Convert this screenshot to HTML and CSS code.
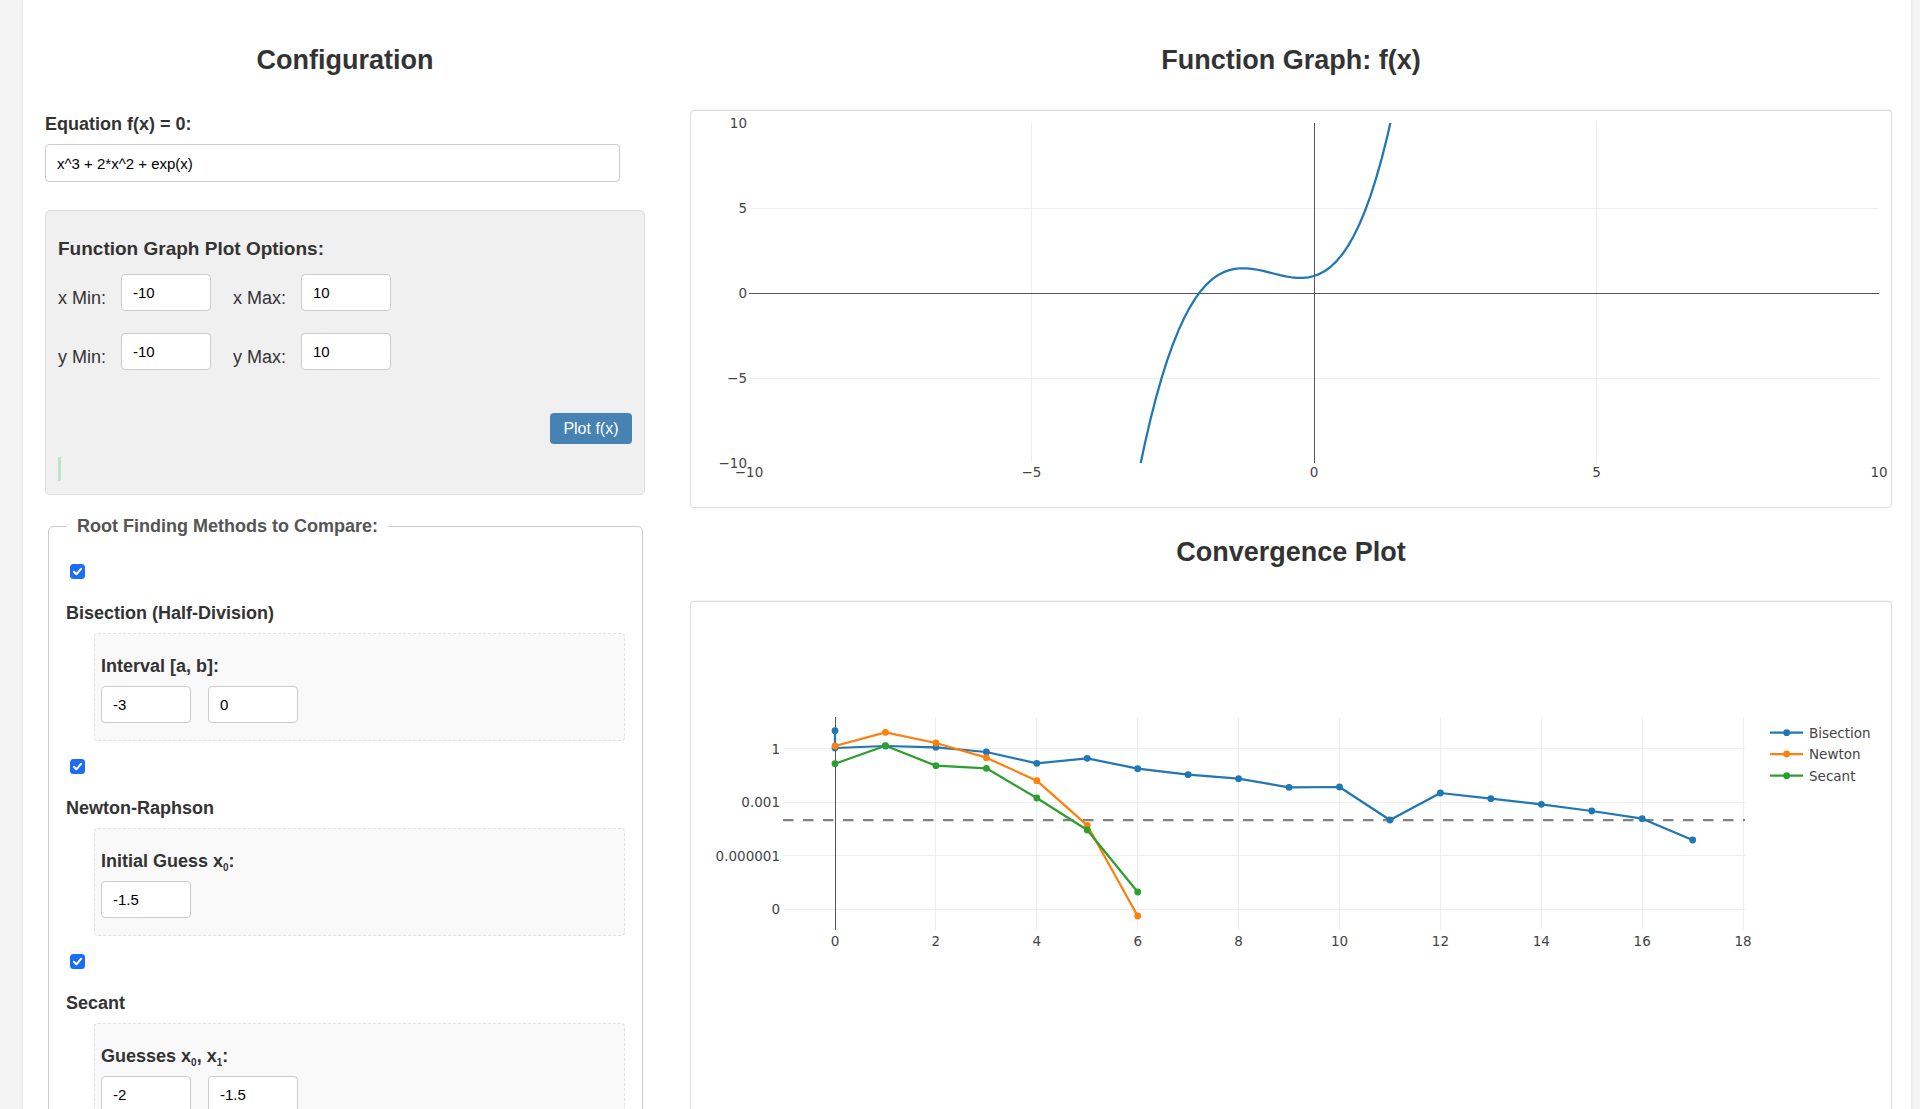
FILE: index.html
```html
<!DOCTYPE html>
<html lang="en">
<head>
<meta charset="utf-8">
<title>Root Finding Methods Comparison</title>
<link rel="stylesheet" href="styles.css">
</head>
<body>
<div class="page">
  <section class="config">
    <h2 class="title">Configuration</h2>
    <label class="field-label" for="eq">Equation f(x) = 0:</label>
    <input id="eq" class="text-input eq-input" type="text" value="x^3 + 2*x^2 + exp(x)">

    <div class="plot-options">
      <h3 class="options-title">Function Graph Plot Options:</h3>
      <div class="range-row">
        <label class="range-label">x Min:</label>
        <input class="text-input small-input" type="text" value="-10">
        <label class="range-label second">x Max:</label>
        <input class="text-input small-input" type="text" value="10">
      </div>
      <div class="range-row row-2">
        <label class="range-label">y Min:</label>
        <input class="text-input small-input" type="text" value="-10">
        <label class="range-label second">y Max:</label>
        <input class="text-input small-input" type="text" value="10">
      </div>
      <div class="button-row"><button class="plot-btn" type="button">Plot f(x)</button></div>
      <div class="status"></div>
    </div>

    <fieldset class="methods">
      <legend>Root Finding Methods to Compare:</legend>

      <div class="method">
        <span class="check"><svg width="15" height="15" viewBox="0 0 15 15"><path d="M3.9 7.8 L6.4 10.3 L11.2 4.7" fill="none" stroke="#fff" stroke-width="2" stroke-linecap="round" stroke-linejoin="round"/></svg></span>
        <h4 class="method-name">Bisection (Half-Division)</h4>
        <div class="params">
          <div class="param-label">Interval [a, b]:</div>
          <div class="param-inputs">
            <input class="text-input small-input" type="text" value="-3">
            <input class="text-input small-input" type="text" value="0">
          </div>
        </div>
      </div>

      <div class="method">
        <span class="check"><svg width="15" height="15" viewBox="0 0 15 15"><path d="M3.9 7.8 L6.4 10.3 L11.2 4.7" fill="none" stroke="#fff" stroke-width="2" stroke-linecap="round" stroke-linejoin="round"/></svg></span>
        <h4 class="method-name">Newton-Raphson</h4>
        <div class="params">
          <div class="param-label">Initial Guess x<sub>0</sub>:</div>
          <div class="param-inputs">
            <input class="text-input small-input" type="text" value="-1.5">
          </div>
        </div>
      </div>

      <div class="method">
        <span class="check"><svg width="15" height="15" viewBox="0 0 15 15"><path d="M3.9 7.8 L6.4 10.3 L11.2 4.7" fill="none" stroke="#fff" stroke-width="2" stroke-linecap="round" stroke-linejoin="round"/></svg></span>
        <h4 class="method-name">Secant</h4>
        <div class="params">
          <div class="param-label">Guesses x<sub>0</sub>, x<sub>1</sub>:</div>
          <div class="param-inputs">
            <input class="text-input small-input" type="text" value="-2">
            <input class="text-input small-input" type="text" value="-1.5">
          </div>
        </div>
      </div>
    </fieldset>
  </section>

  <section class="plots">
    <h2 class="title">Function Graph: f(x)</h2>
    <div class="chart chart-fn">
      <svg width="1200" height="396" viewBox="0 0 1200 396">
        <defs>
          <clipPath id="fnclip"><rect x="58" y="12" width="1130" height="340"/></clipPath>
        </defs>
        <g class="grid">
          <line x1="340.5" y1="12" x2="340.5" y2="352"/>
          <line x1="905.5" y1="12" x2="905.5" y2="352"/>
          <line x1="58" y1="97" x2="1188" y2="97"/>
          <line x1="58" y1="267" x2="1188" y2="267"/>
        </g>
        <g class="zero">
          <line x1="623" y1="12" x2="623" y2="352"/>
          <line x1="58" y1="182" x2="1188" y2="182"/>
        </g>
        <polyline class="curve" clip-path="url(#fnclip)" points="442.2,390.2 447.85,360.94 453.5,334.15 459.15,309.74 464.8,287.59 470.45,267.61 476.1,249.69 481.75,233.73 487.4,219.62 493.05,207.28 498.7,196.57 504.35,187.42 510,179.7 515.65,173.31 521.3,168.18 526.95,164.15 532.6,161.16 538.25,159.08 543.9,157.81 549.55,157.25 555.2,157.3 560.85,157.83 566.5,158.74 572.15,159.93 577.8,161.31 583.45,162.72 589.1,164.1 594.75,165.31 600.4,166.26 606.05,166.8 611.7,166.85 617.35,166.29 623,165 628.65,162.86 634.3,159.75 639.95,155.53 645.6,150.11 651.25,143.34 656.9,135.11 662.55,125.27 668.2,113.69 673.85,100.25 679.5,84.79 685.15,67.16 690.8,47.22 696.45,24.82 702.1,-0.22 707.75,-28.07"/>
        <g class="tick tick-y">
          <text x="56" y="17">10</text>
          <text x="56" y="102">5</text>
          <text x="56" y="187">0</text>
          <text x="56" y="272">−5</text>
          <text x="56" y="357">−10</text>
        </g>
        <g class="tick tick-x">
          <text x="58" y="365.5">−10</text>
          <text x="340.5" y="365.5">−5</text>
          <text x="623" y="365.5">0</text>
          <text x="905.5" y="365.5">5</text>
          <text x="1188" y="365.5">10</text>
        </g>
      </svg>
    </div>

    <h2 class="title conv-title">Convergence Plot</h2>
    <div class="chart chart-conv">
      <svg width="1200" height="558" viewBox="0 0 1200 558">
        <g class="grid">
          <line x1="244.9" y1="115" x2="244.9" y2="328"/>
          <line x1="345.8" y1="115" x2="345.8" y2="328"/>
          <line x1="446.7" y1="115" x2="446.7" y2="328"/>
          <line x1="547.6" y1="115" x2="547.6" y2="328"/>
          <line x1="648.5" y1="115" x2="648.5" y2="328"/>
          <line x1="749.4" y1="115" x2="749.4" y2="328"/>
          <line x1="850.3" y1="115" x2="850.3" y2="328"/>
          <line x1="951.2" y1="115" x2="951.2" y2="328"/>
          <line x1="1052.1" y1="115" x2="1052.1" y2="328"/>
          <line x1="92" y1="146.7" x2="1054" y2="146.7"/>
          <line x1="92" y1="200.2" x2="1054" y2="200.2"/>
          <line x1="92" y1="253.7" x2="1054" y2="253.7"/>
          <line x1="92" y1="307.2" x2="1054" y2="307.2"/>
        </g>
        <g class="zero">
          <line x1="144" y1="115" x2="144" y2="328"/>
        </g>
        <line class="tolerance" x1="92" y1="218" x2="1054" y2="218"/>

        <g class="trace trace-bisection">
          <polyline points="144,128.7 144,146 194.45,144 244.9,145.3 295.35,150 345.8,161.3 396.25,156.3 446.7,166.7 497.15,172.7 547.6,176.7 598.05,185.3 648.5,185 698.95,218 749.4,191 799.85,196.7 850.3,202.3 900.75,209 951.2,216.7 1001.65,238"/>
          <circle cx="144" cy="128.7" r="3.4"/><circle cx="144" cy="146" r="3.4"/><circle cx="194.45" cy="144" r="3.4"/><circle cx="244.9" cy="145.3" r="3.4"/><circle cx="295.35" cy="150" r="3.4"/><circle cx="345.8" cy="161.3" r="3.4"/><circle cx="396.25" cy="156.3" r="3.4"/><circle cx="446.7" cy="166.7" r="3.4"/><circle cx="497.15" cy="172.7" r="3.4"/><circle cx="547.6" cy="176.7" r="3.4"/><circle cx="598.05" cy="185.3" r="3.4"/><circle cx="648.5" cy="185" r="3.4"/><circle cx="698.95" cy="218" r="3.4"/><circle cx="749.4" cy="191" r="3.4"/><circle cx="799.85" cy="196.7" r="3.4"/><circle cx="850.3" cy="202.3" r="3.4"/><circle cx="900.75" cy="209" r="3.4"/><circle cx="951.2" cy="216.7" r="3.4"/><circle cx="1001.65" cy="238" r="3.4"/>
        </g>
        <g class="trace trace-newton">
          <polyline points="144,144 194.45,130.3 244.9,141 295.35,155.7 345.8,178.7 396.25,223.3 446.7,314"/>
          <circle cx="144" cy="144" r="3.4"/><circle cx="194.45" cy="130.3" r="3.4"/><circle cx="244.9" cy="141" r="3.4"/><circle cx="295.35" cy="155.7" r="3.4"/><circle cx="345.8" cy="178.7" r="3.4"/><circle cx="396.25" cy="223.3" r="3.4"/><circle cx="446.7" cy="314" r="3.4"/>
        </g>
        <g class="trace trace-secant">
          <polyline points="144,161.7 194.45,143.7 244.9,163.7 295.35,166.3 345.8,196 396.25,228 446.7,290"/>
          <circle cx="144" cy="161.7" r="3.4"/><circle cx="194.45" cy="143.7" r="3.4"/><circle cx="244.9" cy="163.7" r="3.4"/><circle cx="295.35" cy="166.3" r="3.4"/><circle cx="345.8" cy="196" r="3.4"/><circle cx="396.25" cy="228" r="3.4"/><circle cx="446.7" cy="290" r="3.4"/>
        </g>

        <g class="tick tick-y">
          <text x="89" y="151.6">1</text>
          <text x="89" y="205.1">0.001</text>
          <text x="89" y="258.6">0.000001</text>
          <text x="89" y="312.1">0</text>
        </g>
        <g class="tick tick-x">
          <text x="144" y="344">0</text>
          <text x="244.9" y="344">2</text>
          <text x="345.8" y="344">4</text>
          <text x="446.7" y="344">6</text>
          <text x="547.6" y="344">8</text>
          <text x="648.5" y="344">10</text>
          <text x="749.4" y="344">12</text>
          <text x="850.3" y="344">14</text>
          <text x="951.2" y="344">16</text>
          <text x="1052.1" y="344">18</text>
        </g>

        <g class="legend">
          <g class="trace trace-bisection">
            <line x1="1079" y1="130.7" x2="1112" y2="130.7"/>
            <circle cx="1095.7" cy="130.7" r="3.4"/>
          </g>
          <text class="tick" x="1118" y="135.6">Bisection</text>
          <g class="trace trace-newton">
            <line x1="1079" y1="152" x2="1112" y2="152"/>
            <circle cx="1095.7" cy="152" r="3.4"/>
          </g>
          <text class="tick" x="1118" y="156.9">Newton</text>
          <g class="trace trace-secant">
            <line x1="1079" y1="173.7" x2="1112" y2="173.7"/>
            <circle cx="1095.7" cy="173.7" r="3.4"/>
          </g>
          <text class="tick" x="1118" y="178.6">Secant</text>
        </g>
      </svg>
    </div>
  </section>
</div>
</body>
</html>
```

FILE: styles.css
```css
html, body {
  margin: 0;
  height: 100%;
  overflow: hidden;
}

body {
  background: #f4f4f4;
  font-family: "Liberation Sans", Arial, sans-serif;
  color: #333;
}

.page {
  display: flex;
  gap: 45px;
  width: 1888px;
  min-height: 1200px;
  box-sizing: border-box;
  margin-left: 23px;
  padding: 0 19px 0 22px;
  background: #fff;
  box-shadow: 0 0 3px rgba(0, 0, 0, 0.1);
}

.config {
  flex: none;
  width: 600px;
}

.plots {
  flex: none;
  width: 1202px;
}

.title {
  margin: 0;
  padding-top: 44px;
  font-size: 27px;
  line-height: 32px;
  font-weight: bold;
  text-align: center;
  color: #333;
}

.field-label {
  display: block;
  margin-top: 37px;
  font-size: 18px;
  line-height: 22px;
  font-weight: bold;
}

.text-input {
  box-sizing: border-box;
  height: 37px;
  margin: 0;
  padding: 0 11px;
  border: 1px solid #ccc;
  border-radius: 4px;
  background: #fff;
  color: #000;
  font: 15px "Liberation Sans", Arial, sans-serif;
  outline: none;
}

.eq-input {
  display: block;
  width: 575px;
  height: 38px;
  margin-top: 9px;
}

.small-input {
  width: 90px;
}

.plot-options {
  box-sizing: border-box;
  width: 600px;
  margin-top: 28px;
  padding: 12px 12px 13px;
  border: 1px solid #ddd;
  border-radius: 5px;
  background: #f0f0f0;
}

.options-title {
  margin: 15px 0 0;
  font-size: 19px;
  line-height: 22px;
  font-weight: bold;
}

.range-row {
  display: flex;
  align-items: flex-end;
  margin-top: 14px;
}

.range-row.row-2 {
  margin-top: 22px;
}

.range-label {
  margin: 0 15px 2px 0;
  font-size: 18px;
  line-height: 21px;
}

.range-label.second {
  margin-left: 22px;
}

.button-row {
  display: flex;
  justify-content: flex-end;
  margin-top: 43px;
}

.plot-btn {
  height: 31px;
  padding: 0 13.5px;
  border: none;
  border-radius: 4px;
  background: #4682b4;
  color: #fff;
  font: 16px "Liberation Sans", Arial, sans-serif;
}

.status {
  height: 24px;
  margin-top: 13px;
  border-left: 3px solid #bfe3c4;
}

.methods {
  min-width: 0;
  margin: 21px 2px 0 3px;
  padding: 27px 17px 0;
  border: 1px solid #ccc;
  border-radius: 5px;
}

.methods legend {
  margin-left: 1px;
  padding: 0 10px;
  font-size: 18px;
  line-height: 21px;
  font-weight: bold;
  color: #555;
}

.check {
  display: block;
  width: 15px;
  height: 15px;
  margin-left: 4px;
  border-radius: 3.5px;
  background: #1b6ef3;
}

.check svg {
  display: block;
}

.method-name {
  margin: 23.5px 0 0;
  font-size: 18px;
  line-height: 21px;
  font-weight: bold;
  color: #333;
}

.params {
  margin: 9.5px 0 18px 28px;
  padding: 21.5px 6px 17px;
  border: 1px dashed #e2e2e2;
  border-radius: 4px;
  background: #f9f9f9;
}

.param-label {
  font-size: 18px;
  line-height: 21px;
  font-weight: bold;
}

.param-label sub {
  font-size: 10px;
  line-height: 0;
  vertical-align: -4px;
}

.param-inputs {
  display: flex;
  gap: 17px;
  margin-top: 9.5px;
}

.chart {
  box-sizing: border-box;
  border: 1px solid #ddd;
  border-radius: 4px;
  background: #fff;
  box-shadow: 0 -1px 1px rgba(0, 0, 0, 0.05);
}

.chart svg {
  display: block;
}

.chart-fn {
  height: 398px;
  margin-top: 34px;
}

.conv-title {
  padding-top: 28px;
}

.chart-conv {
  height: 560px;
  margin-top: 33px;
}

.grid line {
  stroke: #eee;
  stroke-width: 1;
  shape-rendering: crispEdges;
}

.zero line {
  stroke: #555;
  stroke-width: 1;
  shape-rendering: crispEdges;
}

.curve {
  fill: none;
  stroke: #1f77b4;
  stroke-width: 2.25;
  stroke-linejoin: round;
}

.tick {
  font-family: "DejaVu Sans", Verdana, sans-serif;
  font-size: 13.5px;
  fill: #444;
}

.tick-y text {
  text-anchor: end;
}

.tick-x text {
  text-anchor: middle;
}

.tolerance {
  stroke: #808080;
  stroke-width: 2.25;
  stroke-dasharray: 10.5 9.5;
}

.trace polyline,
.trace line {
  fill: none;
  stroke-width: 2.25;
  stroke-linejoin: round;
}

.trace-bisection polyline,
.trace-bisection line { stroke: #1f77b4; }
.trace-bisection circle { fill: #1f77b4; }

.trace-newton polyline,
.trace-newton line { stroke: #ff7f0e; }
.trace-newton circle { fill: #ff7f0e; }

.trace-secant polyline,
.trace-secant line { stroke: #2ca02c; }
.trace-secant circle { fill: #2ca02c; }
```
